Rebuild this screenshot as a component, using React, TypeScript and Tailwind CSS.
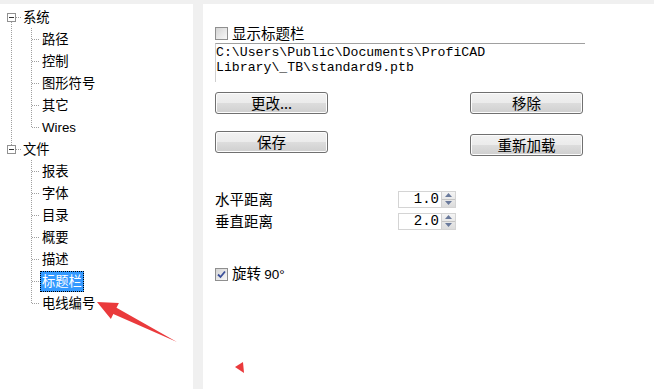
import React from 'react';

type Node = { label: string; children: string[] };

const tree: Node[] = [
  { label: '系统', children: ['路径', '控制', '图形符号', '其它', 'Wires'] },
  { label: '文件', children: ['报表', '字体', '目录', '概要', '描述', '标题栏', '电线编号'] },
];

const selected = '标题栏';
const dot = '#a0a0a0';

const RootLines: React.FC<{ first: boolean; last: boolean }> = ({ first, last }) => (
  <svg width="21" height="22" className="shrink-0" shapeRendering="crispEdges">
    {!first && <line x1="11.5" y1="0" x2="11.5" y2="7" stroke={dot} strokeDasharray="1 1" />}
    {!last && <line x1="11.5" y1="16" x2="11.5" y2="22" stroke={dot} strokeDasharray="1 1" />}
    <line x1="16" y1="11.5" x2="21" y2="11.5" stroke={dot} strokeDasharray="1 1" />
    <rect x="7.5" y="7.5" width="8" height="8" fill="#fff" stroke="#919191" />
    <line x1="9" y1="11.5" x2="14" y2="11.5" stroke="#333" />
  </svg>
);

const ChildLines: React.FC<{ last: boolean; parentLast: boolean }> = ({ last, parentLast }) => (
  <svg width="40" height="22" className="shrink-0" shapeRendering="crispEdges">
    {!parentLast && <line x1="11.5" y1="0" x2="11.5" y2="22" stroke={dot} strokeDasharray="1 1" />}
    <line x1="31.5" y1="0" x2="31.5" y2={last ? 12 : 22} stroke={dot} strokeDasharray="1 1" />
    <line x1="32" y1="11.5" x2="40" y2="11.5" stroke={dot} strokeDasharray="1 1" />
  </svg>
);

const Label: React.FC<{ text: string }> = ({ text }) => {
  const active = text === selected;
  return (
    <span
      className={
        active
          ? 'flex h-[21px] items-center border border-dotted border-black bg-[#3399ff] px-[1px] text-white'
          : 'flex h-[21px] items-center border border-transparent px-[1px] text-black'
      }
    >
      {text}
    </span>
  );
};

const Checkbox: React.FC<{ checked?: boolean }> = ({ checked }) => (
  <div className="flex h-[13px] w-[13px] shrink-0 items-center justify-center border border-[#8f8f8f] bg-[linear-gradient(135deg,#d4d4d4,#f8f8f8)]">
    {checked && (
      <svg width="9" height="9" viewBox="0 0 9 9">
        <path d="M1 4.5 L3.5 7 L8 1.5" fill="none" stroke="#3a4f9a" strokeWidth="1.8" />
      </svg>
    )}
  </div>
);

const Button: React.FC<{ text: string; className?: string }> = ({ text, className }) => (
  <div
    className={
      'flex h-[22px] w-[113px] items-center justify-center rounded-[3px] border border-[#707070] bg-[linear-gradient(#f2f2f2,#ebebeb_50%,#dddddd_50%,#cfcfcf)] text-[14.5px] text-black shadow-[inset_0_0_0_1px_#fcfcfc] ' +
      (className ?? '')
    }
  >
    {text}
  </div>
);

const Spin: React.FC<{ label: string; value: string }> = ({ label, value }) => (
  <div className="flex h-[22px] items-center">
    <span className="w-[183px] text-[14.5px]">{label}</span>
    <div className="flex h-[17px] w-[58px] items-stretch border border-[#d4d4d4] bg-white">
      <span className="flex flex-1 items-center justify-end pr-[2px] font-['Liberation_Mono',monospace] text-[14px] leading-none">
        {value}
      </span>
      <div className="flex w-[14px] flex-col border-l border-[#d0d0d0] bg-[linear-gradient(#f4f4f4,#dcdcdc)]">
        <div className="flex flex-1 items-center justify-center border-b border-[#c4c4c4]">
          <svg width="7" height="4" viewBox="0 0 7 4">
            <path d="M0 4 L3.5 0 L7 4 Z" fill="#6a7a9c" />
          </svg>
        </div>
        <div className="flex flex-1 items-center justify-center">
          <svg width="7" height="4" viewBox="0 0 7 4">
            <path d="M0 0 L3.5 4 L7 0 Z" fill="#6a7a9c" />
          </svg>
        </div>
      </div>
    </div>
  </div>
);

export default function App() {
  return (
    <div className="relative flex h-[389px] w-[654px] gap-[10px] overflow-hidden bg-[#f0f0f0] pt-[4px] font-['Liberation_Sans','Noto_Sans_CJK_SC',sans-serif] text-black">
      {/* tree */}
      <div className="w-[193px] shrink-0 bg-white pt-[2px] text-[13.3px] leading-[19px]">
        {tree.map((node, i) => {
          const first = i === 0;
          const last = i === tree.length - 1;
          return (
            <div key={node.label}>
              <div className="flex h-[22px] items-center">
                <RootLines first={first} last={last} />
                <Label text={node.label} />
              </div>
              {node.children.map((c, j) => (
                <div key={c} className="flex h-[22px] items-center">
                  <ChildLines last={j === node.children.length - 1} parentLast={last} />
                  <Label text={c} />
                </div>
              ))}
            </div>
          );
        })}
      </div>

      {/* settings */}
      <div className="relative flex-1 bg-white pl-[12px] font-['Noto_Sans_CJK_SC',sans-serif]">
        <div className="mt-[21px] flex h-[16px] items-center">
          <Checkbox />
          <span className="ml-[4px] text-[14.5px]">显示标题栏</span>
        </div>
        <div className="mt-[2px] h-[39px] w-[370px] whitespace-pre border-t border-l border-t-[#a0a0a0] border-l-[#cfcfcf] pt-[1px] font-['Liberation_Mono',monospace] text-[13.2px] leading-[15px]">
          <div>C:\Users\Public\Documents\ProfiCAD</div>
          <div>Library\_TB\standard9.ptb</div>
        </div>

        <div className="mt-[10px] flex w-[368px] justify-between">
          <Button text="更改..." />
          <Button text="移除" />
        </div>
        <div className="mt-[17px] flex w-[368px] items-start justify-between">
          <Button text="保存" />
          <Button text="重新加载" className="mt-[3px]" />
        </div>

        <div className="mt-[32px]">
          <Spin label="水平距离" value="1.0" />
          <Spin label="垂直距离" value="2.0" />
        </div>

        <div className="mt-[34px] flex h-[16px] items-center">
          <Checkbox checked />
          <span className="ml-[4px] text-[14.5px]">
            旋转 <span className="font-['Liberation_Sans',sans-serif] text-[13.5px]">90°</span>
          </span>
        </div>

        <svg width="10" height="12" className="absolute left-[32px] top-[358px]">
          <path d="M0 5 L8 0 L9 11 Z" fill="#ea3a3c" />
        </svg>
      </div>

      {/* annotation arrow */}
      <svg width="654" height="389" className="pointer-events-none absolute left-0 top-0">
        <path
          d="M97 302 L118.9 302.9 L116.5 307.8 L177 342 L113.3 314 L110.9 318.9 Z"
          fill="#ea3a3c"
        />
      </svg>
    </div>
  );
}
